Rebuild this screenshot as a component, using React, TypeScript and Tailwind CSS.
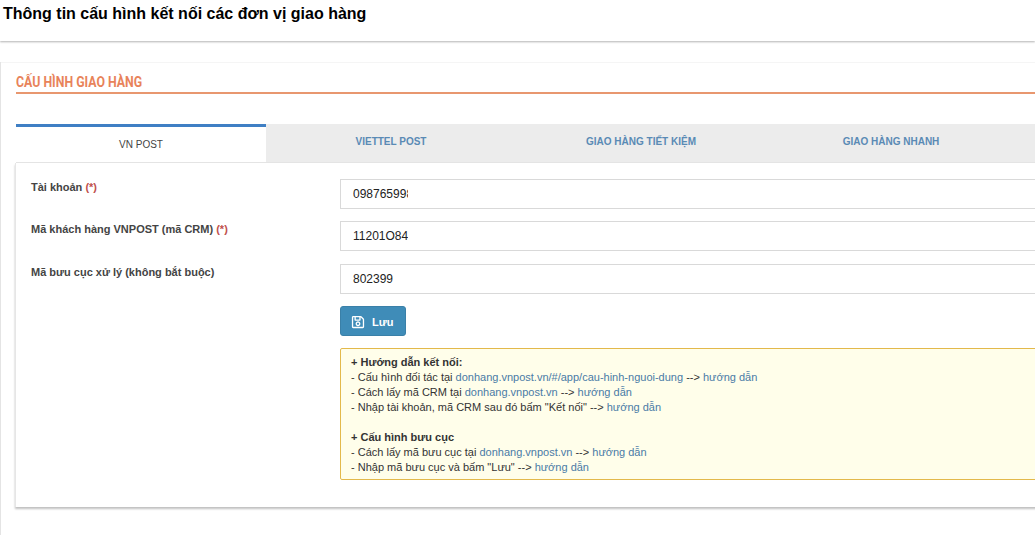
import { FaRegSave } from "react-icons/fa";

const arial = "font-['Liberation_Sans',Arial,sans-serif]";

const fields = [
  { label: "Tài khoản", required: true, value: "0987659980", mt: "mt-0" },
  { label: "Mã khách hàng VNPOST (mã CRM)", required: true, value: "11201O84", mt: "mt-3" },
  { label: "Mã bưu cục xử lý (không bắt buộc)", required: false, value: "802399", mt: "mt-[13px]" },
];

const tabs = ["VIETTEL POST", "GIAO HÀNG TIẾT KIỆM", "GIAO HÀNG NHANH"];

function Link({ children }: { children: string }) {
  return <a className="text-[#4a7ba6]">{children}</a>;
}

export default function App() {
  return (
    <div className={`${arial} h-[536px] w-[1035px] overflow-hidden bg-white text-[#333]`}>
      <header className="h-[41px] bg-white pl-[3px] pt-[5px] shadow-[0_1px_2px_rgba(0,0,0,0.3)]">
        <h1 className="text-[16px] font-bold leading-[18px] text-black">
          Thông tin cấu hình kết nối các đơn vị giao hàng
        </h1>
      </header>

      <main className="mt-[21px] h-[473px] w-[1100px] border-l border-[#e4e4e4]">
        <section className="border-t border-[#f5f5f5] pl-[15px] pt-[11px]">
          <h2 className="h-[18px] origin-left scale-x-[0.88] font-['Roboto',sans-serif] text-[14px] font-bold uppercase leading-[16px] text-[#e8835a]">
            Cấu hình giao hàng
          </h2>
          <div className="h-[2px] bg-[#e8976f]" />

          <div className="mt-[30px] flex h-[39px] border-b border-[#e4e4e4] bg-[#ececec]">
            <div className="flex w-[250px] items-center justify-center border-t-[3px] border-[#3f7fc4] bg-white text-[10px] text-[#444]">
              VN POST
            </div>
            {tabs.map((tab) => (
              <div
                key={tab}
                className="flex w-[250px] items-center justify-center pb-[3px] text-[10px] font-bold text-[#5a8ab5]"
              >
                {tab}
              </div>
            ))}
          </div>

          <div className="-ml-px h-[344px] border-l border-[#e6e6e6] pl-[15px] pt-4 shadow-[0_2px_2px_rgba(0,0,0,0.25)]">
            {fields.map((field) => (
              <div key={field.label} className={`flex ${field.mt}`}>
                <label className="w-[309px] pt-[2px] text-[11px] font-bold leading-[13px] text-[#444]">
                  {field.label}{" "}
                  {field.required && <span className="text-[#c0504d]">(*)</span>}
                </label>
                <input
                  readOnly
                  value={field.value}
                  className="h-[30px] w-[720px] border border-[#d9d9d9] pl-3 pr-[651px] text-[12px] text-[#222] outline-none"
                />
              </div>
            ))}

            <div className="ml-[309px] mt-3">
              <button className="flex h-[30px] w-[66px] items-center gap-[7px] rounded-[3px] border border-[#3a80a8] bg-[#3f8cb8] pl-[10px] pt-[2px] text-[11px] font-bold text-white">
                <FaRegSave className="text-[14px]" />
                Lưu
              </button>

              <div className="mt-3 h-[132px] w-[720px] rounded-[2px] border border-[#e3b94b] bg-[#fffeea] pl-[10px] pt-[6px] text-[11px] leading-[15px] text-[#333]">
                <p className="font-bold">+ Hướng dẫn kết nối:</p>
                <p>
                  - Cấu hình đối tác tại <Link>donhang.vnpost.vn/#/app/cau-hinh-nguoi-dung</Link> --&gt;{" "}
                  <Link>hướng dẫn</Link>
                </p>
                <p>
                  - Cách lấy mã CRM tại <Link>donhang.vnpost.vn</Link> --&gt; <Link>hướng dẫn</Link>
                </p>
                <p>
                  - Nhập tài khoản, mã CRM sau đó bấm "Kết nối" --&gt; <Link>hướng dẫn</Link>
                </p>
                <p className="mt-[15px] font-bold">+ Cấu hình bưu cục</p>
                <p>
                  - Cách lấy mã bưu cục tại <Link>donhang.vnpost.vn</Link> --&gt; <Link>hướng dẫn</Link>
                </p>
                <p>
                  - Nhập mã bưu cục và bấm "Lưu" --&gt; <Link>hướng dẫn</Link>
                </p>
              </div>
            </div>
          </div>
        </section>
      </main>
    </div>
  );
}
